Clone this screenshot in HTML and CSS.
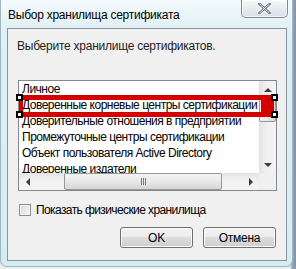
FILE: index.html
```html
<!DOCTYPE html>
<html lang="ru">
<head>
    <meta charset="UTF-8">
    <title>Выбор хранилища сертификата</title>
    <link rel="stylesheet" href="styles.css">
</head>
<body>
    <div class="desktop">
        <div class="window">
            <div class="titlebar">
                <span class="title">Выбор хранилища сертификата</span>
                <span class="close-btn">
                    <svg width="13" height="11" viewBox="0 0 13 11">
                        <path d="M1.5 1 L11.5 10 M11.5 1 L1.5 10" stroke="#fff" stroke-width="4" stroke-linecap="square"/>
                        <path d="M1.5 1 L11.5 10 M11.5 1 L1.5 10" stroke="#5a6670" stroke-width="2.4" stroke-linecap="square"/>
                        <path d="M1.5 1 L11.5 10 M11.5 1 L1.5 10" stroke="#f4f6f8" stroke-width="1"/>
                    </svg>
                </span>
            </div>

            <div class="client">
                <p class="prompt">Выберите хранилище сертификатов.</p>

                <div class="listbox">
                    <ul class="list">
                        <li>Личное</li>
                        <li>Доверенные корневые центры сертификации</li>
                        <li>Доверительные отношения в предприятии</li>
                        <li>Промежуточные центры сертификации</li>
                        <li>Объект пользователя Active Directory</li>
                        <li>Доверенные издатели</li>
                    </ul>
                    <div class="vscroll">
                        <span class="sb-btn"><i class="arrow up"></i></span>
                        <span class="vthumb"><i class="grip-h"></i></span>
                        <span class="sb-track"></span>
                        <span class="sb-btn"><i class="arrow down"></i></span>
                    </div>
                    <div class="hscroll">
                        <span class="sb-btn"><i class="arrow left"></i></span>
                        <span class="sb-track short"></span>
                        <span class="hthumb"><i class="grip-v"></i></span>
                        <span class="sb-track"></span>
                        <span class="sb-btn"><i class="arrow right"></i></span>
                    </div>
                    <div class="corner"></div>

                    <div class="mark">
                        <i class="handle tl"></i>
                        <i class="handle bl"></i>
                        <i class="handle tr"></i>
                        <i class="handle br"></i>
                    </div>
                </div>

                <label class="check">
                    <span class="box"></span>
                    Показать физические хранилища
                </label>

                <div class="buttons">
                    <button class="btn">OK</button>
                    <button class="btn">Отмена</button>
                </div>
            </div>
        </div>
    </div>
</body>
</html>
```

FILE: styles.css
```css
* {
    margin: 0;
    padding: 0;
    box-sizing: border-box;
}

body {
    width: 296px;
    height: 269px;
    overflow: hidden;
    background: #d7dde2;
    font-family: "Liberation Sans", Arial, sans-serif;
    font-size: 12px;
    letter-spacing: -0.25px;
    color: #000;
}

.desktop {
    width: 296px;
    height: 269px;
    background: linear-gradient(90deg, #e9eef1 0, #e9eef1 290px, #9aa8b4 292px, #7d93a8 296px);
}

.window {
    width: 293px;
    height: 267px;
    border-radius: 0 0 7px 7px;
    border: 1px solid #9fb6c0;
    border-top: none;
    background: linear-gradient(180deg, #f4fafc 0, #dff0f6 30px, #d6ecf3 100%);
    display: flex;
    flex-direction: column;
    padding: 0 5px 5px 6px;
}

.titlebar {
    height: 28px;
    display: flex;
    justify-content: space-between;
    align-items: flex-start;
}

.title {
    margin: 8px 0 0 1px;
    line-height: 14px;
    color: #000;
}

.close-btn {
    width: 47px;
    height: 18px;
    margin-right: -1px;
    border: 1px solid #7c8a96;
    border-top: none;
    border-radius: 0 0 5px 5px;
    background: linear-gradient(180deg, #f6f9fb 0, #e6ecf0 50%, #d8e0e6 100%);
    box-shadow: inset 0 0 0 1px rgba(255, 255, 255, 0.8);
    display: flex;
    justify-content: center;
    align-items: center;
}

.client {
    flex: 1;
    background: #f0f0f0;
    border: 1px solid #8c949b;
    display: flex;
    flex-direction: column;
    padding: 0 9px 0 10px;
}

.prompt {
    margin: 10px 0 0 -1px;
    line-height: 14px;
    color: #1e1e1e;
}

.listbox {
    position: relative;
    margin-top: 27px;
    height: 111px;
    border: 1px solid #828790;
    background: #fff;
    display: grid;
    grid-template-columns: 1fr 17px;
    grid-template-rows: 1fr 17px;
}

.list {
    list-style: none;
    overflow: hidden;
    white-space: nowrap;
    padding: 0 0 0 3px;
    letter-spacing: -0.5px;
}

.list li {
    height: 16px;
    line-height: 16px;
}

.vscroll {
    display: flex;
    flex-direction: column;
    background: linear-gradient(90deg, #e3e3e3, #f0f0f0 40%, #f4f4f4);
}

.hscroll {
    display: flex;
    background: linear-gradient(180deg, #e3e3e3, #f0f0f0 40%, #f4f4f4);
}

.corner {
    background: #f0f0f0;
}

.sb-btn {
    width: 17px;
    height: 17px;
    flex: none;
    display: flex;
    justify-content: center;
    align-items: center;
}

.sb-track {
    flex: 1;
}

.sb-track.short {
    flex: 0 0 28px;
}

.arrow {
    width: 0;
    height: 0;
    border: 4px solid transparent;
}

.arrow.up {
    border-bottom: 4px solid #3c3c3c;
    border-top: none;
}

.arrow.down {
    border-top: 4px solid #3c3c3c;
    border-bottom: none;
}

.arrow.left {
    border-right: 4px solid #3c3c3c;
    border-left: none;
}

.arrow.right {
    border-left: 4px solid #3c3c3c;
    border-right: none;
}

.vthumb {
    height: 23px;
    margin: 1px 0 0 0;
    border: 1px solid #979797;
    border-radius: 2px;
    background: linear-gradient(90deg, #f3f3f3, #e8e8e8 50%, #d6d6d6);
    display: flex;
    justify-content: center;
    align-items: center;
}

.hthumb {
    width: 158px;
    flex: none;
    border: 1px solid #979797;
    border-radius: 2px;
    background: linear-gradient(180deg, #f3f3f3, #e8e8e8 50%, #d6d6d6);
    display: flex;
    justify-content: center;
    align-items: center;
}

.grip-h {
    width: 7px;
    height: 5px;
    border-top: 1px solid #7a7a7a;
    border-bottom: 1px solid #7a7a7a;
    background: linear-gradient(180deg, transparent 1px, #7a7a7a 1px, #7a7a7a 2px, transparent 2px);
}

.grip-v {
    width: 5px;
    height: 7px;
    border-left: 1px solid #7a7a7a;
    border-right: 1px solid #7a7a7a;
    background: linear-gradient(90deg, transparent 1px, #7a7a7a 1px, #7a7a7a 2px, transparent 2px);
}

/* красная рамка поверх выбранного пункта */
.mark {
    position: absolute;
    left: 0;
    top: 14px;
    width: 255px;
    height: 22px;
    border: 5px solid #d40000;
    border-left-width: 4px;
    border-right-width: 13px;
}

.handle {
    position: absolute;
    width: 7px;
    height: 7px;
    border: 2px solid #000;
    background: #fff;
}

.handle.tl { left: -7px; top: -6px; }
.handle.bl { left: -7px; bottom: -6px; }
.handle.tr { right: -17px; top: -6px; }
.handle.br { right: -17px; bottom: -6px; }

.check {
    margin: 12px 0 0 1px;
    display: flex;
    align-items: center;
    gap: 5px;
    line-height: 14px;
    letter-spacing: -0.6px;
}

.box {
    width: 12px;
    height: 12px;
    border: 1px solid #8e8f8f;
    background: linear-gradient(135deg, #d8d8d8, #f6f6f6);
    box-shadow: inset 0 0 0 1px #f4f4f4;
}

.buttons {
    margin-top: 10px;
    display: flex;
    justify-content: flex-end;
    gap: 10px;
    padding-right: 1px;
}

.btn {
    width: 73px;
    height: 21px;
    border: 1px solid #707070;
    border-radius: 3px;
    background: linear-gradient(180deg, #f2f2f2 0, #ebebeb 50%, #dddddd 50%, #cfcfcf 100%);
    box-shadow: inset 0 0 0 1px #fcfcfc;
    font-family: inherit;
    font-size: 12px;
    letter-spacing: inherit;
    color: #000;
}
```
